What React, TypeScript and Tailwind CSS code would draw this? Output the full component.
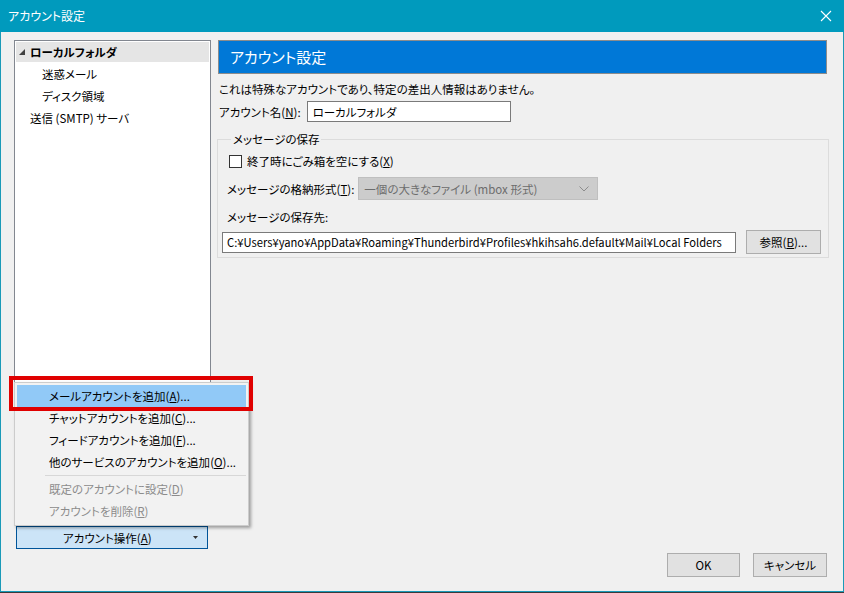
import React from 'react'

const jp = "font-['Noto_Sans_CJK_JP','Noto_Sans',sans-serif] [font-feature-settings:'palt']"

function MenuItem({ label, k, rest, active, disabled }: { label: string; k: string; rest: string; active?: boolean; disabled?: boolean }) {
  return (
    <div
      className={`h-[22px] flex items-center pl-[32px] whitespace-nowrap ${active ? 'bg-[#91c9f7]' : ''} ${disabled ? 'text-[#8c8c8c]' : 'text-black'}`}
    >
      {label}(<span className="underline">{k}</span>){rest}
    </div>
  )
}

function Btn({ children, className }: { children: React.ReactNode; className?: string }) {
  return (
    <div className={`h-[24px] flex items-center justify-center bg-[#e1e1e1] border border-[#adadad] ${className ?? ''}`}>
      {children}
    </div>
  )
}

export default function App() {
  return (
    <div className={`w-[844px] h-[593px] bg-[#3a3a3a] relative overflow-hidden text-[11.5px] leading-[16px] ${jp}`}>
      <div className="h-[592px] flex flex-col border border-t-0 border-[#1a9ab8] bg-[#f0f0f0]">
        {/* title bar */}
        <div className="h-[32px] -mx-px bg-[#009abd] flex items-center justify-between pl-[8px] pr-[10px] text-white text-[12px]">
          <span>アカウント設定</span>
          <svg width="12" height="12" viewBox="0 0 12 12" className="mr-[2px]">
            <path d="M1 1 L11 11 M11 1 L1 11" stroke="white" strokeWidth="1.1" />
          </svg>
        </div>

        <div className="flex flex-1">
          {/* left column */}
          <div className="flex flex-col pl-[13px] pt-[8px]">
            <div className="w-[197px] h-[480px] bg-white border border-[#828790] pt-px px-px">
              <div className="h-[20px] bg-[#e5e5e5] flex items-center font-bold">
                <svg width="6" height="6" viewBox="0 0 6 6" className="ml-[3px] mr-[5px]">
                  <path d="M6 0 L6 6 L0 6 Z" fill="#404040" />
                </svg>
                ローカルフォルダ
              </div>
              <div className="h-[23px] flex items-center pl-[26px]">迷惑メール</div>
              <div className="h-[22px] flex items-center pl-[26px]">ディスク領域</div>
              <div className="h-[22px] flex items-center pl-[14px]">送信 (SMTP) サーバ</div>
            </div>
            <div className="mt-[6px] ml-[2px] w-[192px] h-[23px] bg-[#cce4f7] border border-[#005499] flex items-center relative">
              <span className="ml-[46px]">
                アカウント操作(<span className="underline">A</span>)
              </span>
              <svg width="5" height="3" viewBox="0 0 5 3" className="absolute left-[176px] top-[9px]">
                <path d="M0 0 L5 0 L2.5 3 Z" fill="#333" />
              </svg>
            </div>
          </div>

          {/* right column */}
          <div className="flex flex-col flex-1 min-w-0 pl-[7px] pt-[8px] pr-[16px] pb-[14px]">
            <div className="w-[609px] h-[34px] border border-[#8c8c8c] bg-[#0078d7] flex items-center pl-[11px] text-white text-[15px]">
              アカウント設定
            </div>
            <div className="mt-[7px] ml-[1px]">これは特殊なアカウントであり、特定の差出人情報はありません。</div>
            <div className="mt-[4px] ml-[1px] flex items-center">
              <span>
                アカウント名(<span className="underline">N</span>):
              </span>
              <div className="ml-[6px] w-[204px] h-[21px] bg-white border border-[#7a7a7a] flex items-center pl-[5px]">
                ローカルフォルダ
              </div>
            </div>

            <fieldset className="mt-[10px] w-[612px] h-[126px] border border-[#dcdcdc] pl-[9px] pr-[7px] m-0 -ml-[1px]">
              <legend className="ml-[4px] px-[2px] leading-[14px]">メッセージの保存</legend>
              <div className="mt-[7px] flex items-center ml-[2px]">
                <div className="w-[13px] h-[13px] bg-white border border-[#333]" />
                <span className="ml-[5px]">
                  終了時にごみ箱を空にする(<span className="underline">X</span>)
                </span>
              </div>
              <div className="mt-[8px] flex items-center">
                <span className="whitespace-nowrap">
                  メッセージの格納形式(<span className="underline">T</span>):
                </span>
                <div className="ml-[4px] w-[240px] h-[23px] bg-[#cccccc] border border-[#bfbfbf] flex items-center pl-[5px] text-[#6d6d6d] relative">
                  一個の大きなファイル (mbox 形式)
                  <svg width="10" height="6" viewBox="0 0 10 6" className="absolute right-[8px] top-[8px]">
                    <path d="M0.5 0.5 L5 5 L9.5 0.5" stroke="#8c8c8c" fill="none" strokeWidth="1" />
                  </svg>
                </div>
              </div>
              <div className="mt-[9px]">メッセージの保存先:</div>
              <div className="mt-[5px] flex items-center -ml-[5px]">
                <div className="w-[514px] h-[21px] bg-white border border-[#7a7a7a] flex items-center pl-[4px] whitespace-nowrap overflow-hidden text-[11.2px]">
                  C:¥Users¥yano¥AppData¥Roaming¥Thunderbird¥Profiles¥hkihsah6.default¥Mail¥Local Folders
                </div>
                <Btn className="ml-[10px] w-[75px]">
                  参照(<span className="underline">B</span>)...
                </Btn>
              </div>
            </fieldset>

            <div className="mt-auto flex justify-end gap-[13px]">
              <Btn className="w-[73px]">OK</Btn>
              <Btn className="w-[74px]">キャンセル</Btn>
            </div>
          </div>
        </div>
      </div>

      {/* popup menu */}
      <div className="absolute left-[14px] top-[382px] w-[235px] h-[144px] bg-[#f2f2f2] border border-[#cccccc] shadow-[2px_2px_3px_rgba(0,0,0,0.35)] p-[2px]">
        <MenuItem label="メールアカウントを追加" k="A" rest="..." active />
        <MenuItem label="チャットアカウントを追加" k="C" rest="..." />
        <MenuItem label="フィードアカウントを追加" k="F" rest="..." />
        <MenuItem label="他のサービスのアカウントを追加" k="O" rest="..." />
        <div className="h-px bg-[#d7d7d7] ml-[28px] my-[2px]" />
        <MenuItem label="既定のアカウントに設定" k="D" rest="" disabled />
        <MenuItem label="アカウントを削除" k="R" rest="" disabled />
      </div>

      {/* annotation */}
      <div className="absolute left-[9px] top-[376px] w-[244px] h-[35px] border-[4px] border-[#e00000]" />
    </div>
  )
}
